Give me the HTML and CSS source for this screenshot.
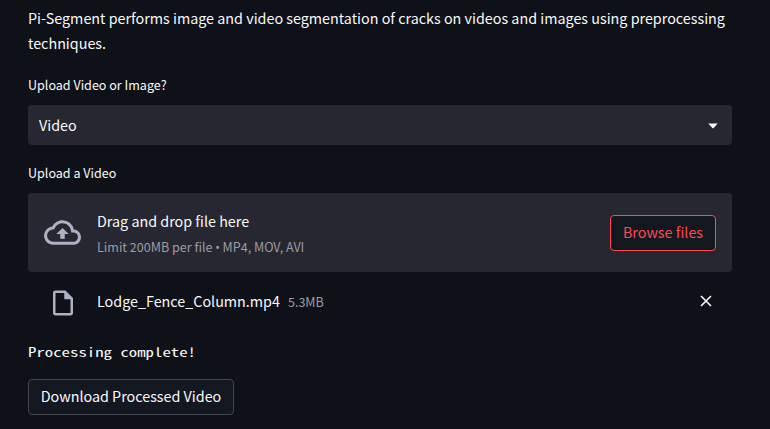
FILE: index.html
```html
<!DOCTYPE html>
<html lang="en">
<head>
<meta charset="utf-8">
<title>Pi-Segment</title>
<link rel="stylesheet" href="styles.css">
</head>
<body>
<main class="page">
  <p class="intro">Pi-Segment performs image and video segmentation of cracks on videos and images using preprocessing<br>techniques.</p>
  <div class="label">Upload Video or Image?</div>
  <div class="select">
    <span>Video</span>
    <svg class="caret" viewBox="0 0 10 6"><path d="M.3 .5h9.4L5.7 5a1 1 0 0 1-1.4 0z"/></svg>
  </div>
  <div class="label label-upload">Upload a Video</div>
  <section class="dropzone">
    <svg class="cloud" viewBox="0 0 24 24"><path d="M19.35 10.04A7.49 7.49 0 0012 4C9.11 4 6.6 5.64 5.35 8.04A5.994 5.994 0 000 14c0 3.31 2.69 6 6 6h13c2.76 0 5-2.24 5-5 0-2.64-2.05-4.78-4.65-4.96zM19 18H6c-2.21 0-4-1.79-4-4 0-2.05 1.53-3.76 3.56-3.97l1.07-.11.5-.95A5.469 5.469 0 0112 6c2.62 0 4.88 1.86 5.39 4.43l.3 1.5 1.53.11A2.98 2.98 0 0122 15c0 1.65-1.35 3-3 3zM8 13h2.55v3h2.9v-3H16l-4-4z"/></svg>
    <div class="hint">
      <span class="hint-title">Drag and drop file here</span>
      <span class="small">Limit 200MB per file <span class="bullet">•</span> MP4, MOV, AVI</span>
    </div>
    <button class="btn btn-browse">Browse files</button>
  </section>
  <div class="file">
    <svg class="doc" viewBox="0 0 24 24"><path d="M14 2H6c-1.1 0-1.99.9-1.99 2L4 20c0 1.1.89 2 1.99 2H18c1.1 0 2-.9 2-2V8l-6-6zM6 20V4h7v5h5v11H6z"/></svg>
    <span class="file-name">Lodge_Fence_Column.mp4</span>
    <span class="small file-size">5.3MB</span>
    <svg class="close" viewBox="0 0 12 12"><path d="M1 1l10 10M11 1L1 11"/></svg>
  </div>
  <div class="status">Processing complete!</div>
  <button class="btn btn-download">Download Processed Video</button>
</main>
</body>
</html>
```
FILE: styles.css
```css
* { box-sizing: border-box; }
body {
  margin: 0;
  height: 429px;
  overflow: hidden;
  background: #0e1117;
  color: #fafafa;
  font-family: "Noto Sans CJK SC", sans-serif;
  font-size: 14.33px;
}
.page {
  display: flex;
  flex-direction: column;
  width: 704px;
  margin-left: 28px;
  padding-top: 5px;
}
.intro { margin: 0; height: 52px; line-height: 25px; white-space: nowrap; }
.label { margin-top: 18px; height: 20px; line-height: 20px; font-size: 12.55px; }
.select {
  display: flex;
  align-items: center;
  justify-content: space-between;
  height: 40px;
  margin-top: 10px;
  padding: 0 14px 2px 11px;
  border-radius: 4px;
  background: #262730;
}
.caret { width: 10px; height: 6px; margin-top: 3px; fill: #fafafa; }
.label-upload { margin-top: 18px; }
.dropzone {
  display: flex;
  align-items: center;
  height: 79px;
  margin-top: 10px;
  padding: 0 16px;
  border-radius: 4px;
  background: #262730;
}
.cloud { width: 37px; height: 37px; margin-right: 16px; fill: #adb1c3; }
.hint { display: flex; flex-direction: column; flex: 1; }
.hint-title { line-height: 26px; }
.small { font-size: 12.55px; line-height: 26px; color: #9c9da3; }
.hint .small { height: 24px; }
.bullet { font-family: "Noto Sans", sans-serif; font-size: 12px; line-height: 1; }
.btn {
  height: 36px;
  padding: 0 0 2px;
  border: 1px solid #41444c;
  border-radius: 4px;
  background: #131720;
  color: #fafafa;
  font: inherit;
  white-space: nowrap;
}
.btn-browse { width: 106px; border-color: #ff4b4b; color: #ff4b4b; }
.file {
  display: flex;
  align-items: center;
  height: 30px;
  margin-top: 15px;
  padding: 0 20px 0 19.5px;
}
.doc { width: 30px; height: 30px; margin: 1px 19.5px 0 0; fill: #adb1c3; }
.file-name { padding-bottom: 4px; }
.file-size { margin-left: 8px; }
.close { width: 12px; height: 12px; margin: 0 0 2px auto; fill: none; stroke: #fafafa; stroke-width: 1.6; }
.status {
  width: 130px;
  height: 20px;
  margin-top: 25px;
  line-height: 20px;
  font-family: "Noto Sans Mono CJK SC", "DejaVu Sans Mono", monospace;
  font-size: 12.5px;
  white-space: nowrap;
  transform: scaleX(1.344);
  transform-origin: left;
}
.btn-download { width: 206px; margin-top: 17px; padding-bottom: 3px; }
```
